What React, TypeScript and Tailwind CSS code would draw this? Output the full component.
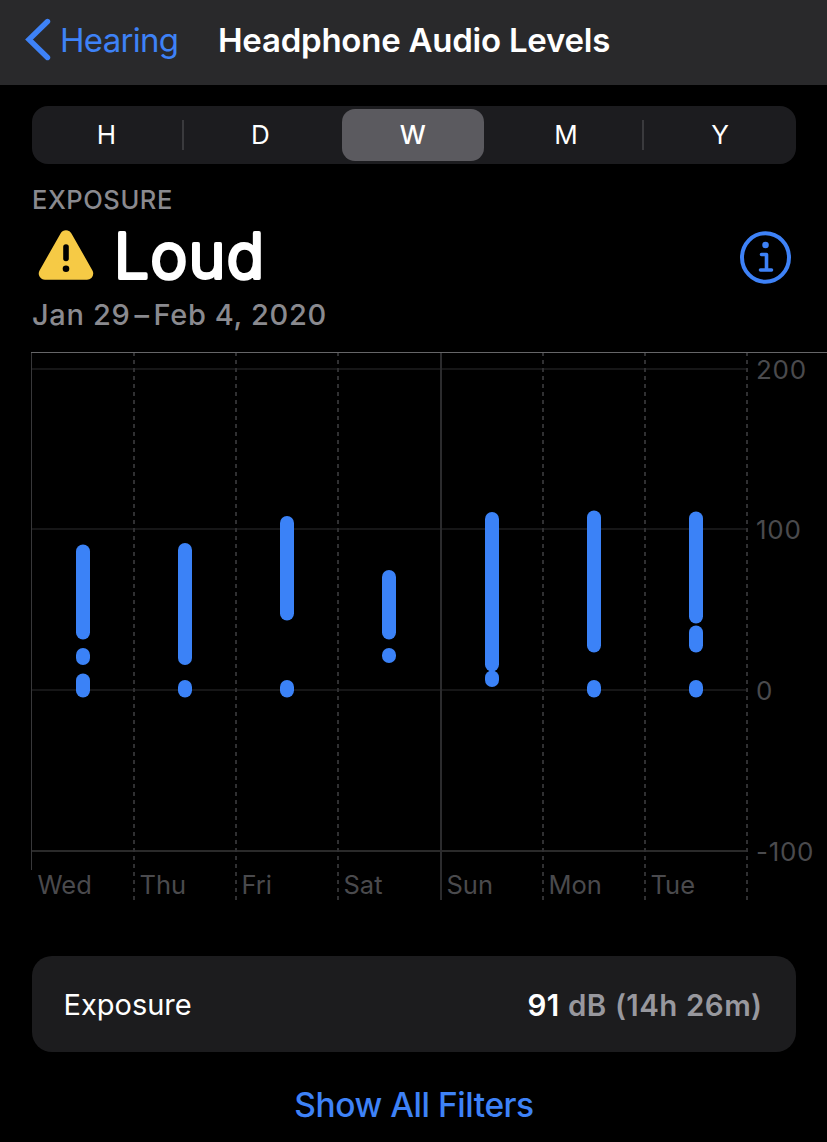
type Segment = [top: number, bottom: number]

interface Day {
  label: string
  x: number
  segments: Segment[]
}

const CHART_TOP = 352

const DAYS: Day[] = [
  { label: 'Wed', x: 32, segments: [[544.5, 639.5], [648, 665], [673.5, 697.5]] },
  { label: 'Thu', x: 134, segments: [[543, 665], [680, 697.5]] },
  { label: 'Fri', x: 236, segments: [[516, 620.5], [680, 697.5]] },
  { label: 'Sat', x: 338, segments: [[570, 639.5], [648, 663]] },
  { label: 'Sun', x: 441, segments: [[512, 671.5], [670.5, 687]] },
  { label: 'Mon', x: 543, segments: [[510.5, 652.5], [680, 697.5]] },
  { label: 'Tue', x: 645, segments: [[511.5, 623.5], [625.5, 652.5], [680, 697.5]] },
]

const LEVELS = [
  { label: '200', y: 369, stroke: '#161617' },
  { label: '100', y: 529, stroke: '#161617' },
  { label: '0', y: 690, stroke: '#161617' },
  { label: '-100', y: 851, stroke: '#2a2a2a' },
]

const DASHED = [134, 236, 338, 543, 645, 747]

function Header() {
  return (
    <header className="flex h-[85px] items-center bg-[#29292b] pb-[5px] pl-[25px]">
      <svg width="26" height="44" viewBox="0 0 26 44" fill="none" className="shrink-0">
        <path d="M22.5 3.5 4 21.5 22.5 39.5" stroke="#3e82f7" strokeWidth="5.4" strokeLinecap="round" strokeLinejoin="miter" />
      </svg>
      <button className="ml-[9px] w-[158px] text-left text-[33px] leading-10 tracking-[-0.7px] whitespace-nowrap text-[#3e82f7]">Hearing</button>
      <h1 className="text-[33px] leading-10 font-semibold tracking-[-0.24px] whitespace-nowrap text-white">Headphone Audio Levels</h1>
    </header>
  )
}

function RangePicker() {
  return (
    <div className="mx-auto mt-[21px] flex h-[58px] w-[764px] items-center rounded-2xl bg-[#1c1c1f] text-center text-[26px] text-white">
      <button className="w-[150px] pb-0.5">H</button>
      <span className="h-[30px] w-0.5 bg-[#3a3a3d]" />
      <button className="w-[153px] pb-0.5 pl-px">D</button>
      <button className="mr-1.5 ml-[5px] h-[52px] w-[142px] rounded-[13px] bg-[#5b5a5f] pb-0.5 font-medium tracking-[-0.5px]">W</button>
      <button className="w-[152px] pb-0.5 pl-px">M</button>
      <span className="h-[30px] w-0.5 bg-[#3a3a3d]" />
      <button className="w-[152px] pb-0.5 pl-px">Y</button>
    </div>
  )
}

function Summary() {
  return (
    <section className="h-[188px] pt-[21px] pr-9 pl-8">
      <p className="text-[25.5px] leading-[30px] font-medium tracking-[0.55px] text-[#8a8a8f]">EXPOSURE</p>
      <div className="flex h-[85px] items-center justify-between">
        <div className="flex items-center">
          <svg width="68" height="86" viewBox="32 215 68 86">
            <path d="M66 236.500 45 273.500H87Z" fill="#f6ca45" stroke="#f6ca45" strokeWidth="12.500" strokeLinejoin="round" />
            <path d="M66 247V258.500" stroke="#000" strokeWidth="5.600" strokeLinecap="round" />
            <circle cx="66" cy="268.700" r="3.300" fill="#000" />
          </svg>
          <svg width="180" height="86" viewBox="100 215 180 86">
            <text
              x="114"
              y="278.300"
              fontSize="62"
              fontWeight="300"
              letterSpacing="1.5"
              fill="#fff"
              stroke="#fff"
              strokeWidth="3.800"
              strokeLinejoin="round"
            >
              Loud
            </text>
          </svg>
        </div>
        <svg width="52" height="53" viewBox="0 0 52 53" fill="none" stroke="#3e82f7">
          <ellipse cx="26.500" cy="26.500" rx="23.500" ry="24.300" strokeWidth="4" />
          <path d="M22.500 23.500H27.500V39M21.500 39H32.500" strokeWidth="3.600" strokeLinecap="round" strokeLinejoin="round" />
          <circle cx="26.500" cy="14" r="3.300" fill="#3e82f7" stroke="none" />
        </svg>
      </div>
      <p className="text-[29px] leading-[30px] font-medium tracking-[0.65px] text-[#8a8a8f]">
        Jan 29<span className="mx-[4px]">–</span>Feb 4, 2020
      </p>
    </section>
  )
}

function ExposureChart() {
  return (
    <svg width="827" height="550" viewBox={`0 ${CHART_TOP} 827 550`} className="block">
      {LEVELS.map((level) => (
        <g key={level.label}>
          <path d={`M32 ${level.y}H748`} stroke={level.stroke} strokeWidth="2" />
          <text x="756" y={level.y + 10} fontSize="26" letterSpacing="0.7" fill="#4a4a4d">
            {level.label}
          </text>
        </g>
      ))}
      {DASHED.map((x) => (
        <path key={x} d={`M${x} 352V900`} stroke="#303032" strokeWidth="2" strokeDasharray="4 4" />
      ))}
      <path d="M441 353V900" stroke="#2b2b2d" strokeWidth="2" />
      <path d="M31.500 352V870" stroke="#38383a" />
      <path d="M31 352.500H827" stroke="#666668" />
      {DAYS.map((day) => (
        <g key={day.label}>
          {day.segments.map(([top, bottom]) => (
            <rect key={top} x={day.x + 44} y={top} width="14" height={bottom - top} rx="7" fill="#3b82f7" />
          ))}
          <text x={day.x + 5.5} y="894" fontSize="25.500" fill="#4a4a4d">
            {day.label}
          </text>
        </g>
      ))}
    </svg>
  )
}

export default function App() {
  return (
    <div className="h-[1142px] w-[827px] overflow-hidden bg-black font-['Inter',sans-serif]">
      <Header />
      <RangePicker />
      <Summary />
      <ExposureChart />
      <div className="mx-auto mt-[54px] flex h-24 w-[764px] items-center justify-between rounded-[20px] bg-[#1c1c1e] pt-0.5 pr-[33px] pl-8 text-[29px] text-white">
        <span>Exposure</span>
        <span className="text-[29.5px] font-semibold tracking-[0.4px] [word-spacing:0.5px]">
          91 <span className="text-[#98989e]">dB (14h 26m)</span>
        </span>
      </div>
      <button className="mt-8 block w-full pl-px text-center text-[33.5px] leading-[42px] font-medium tracking-[-0.45px] text-[#3e82f7]">Show All Filters</button>
    </div>
  )
}
